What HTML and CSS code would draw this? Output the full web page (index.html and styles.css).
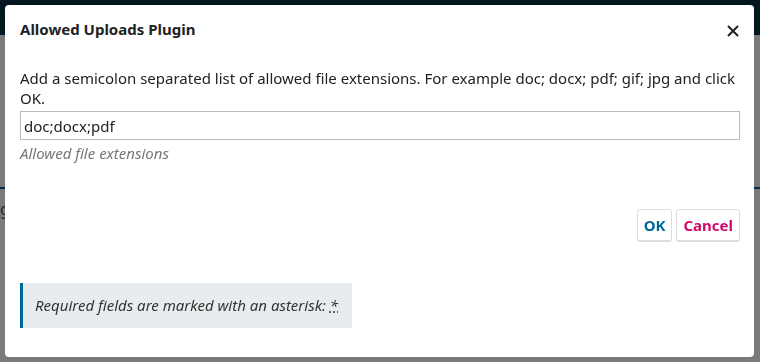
FILE: index.html
```html
<!DOCTYPE html>
<html lang="en">
<head>
  <meta charset="UTF-8" />
  <title>Allowed Uploads Plugin</title>
  <link rel="stylesheet" href="styles.css">
</head>
<body>
  <header class="app-bar"></header>
  <main class="page">
    <div class="page-tabs"></div>
    <p class="page-text">g</p>
  </main>

  <div class="overlay">
    <div class="modal" role="dialog">
      <div class="modal-header">
        <h2>Allowed Uploads Plugin</h2>
        <button class="close" aria-label="Close">
          <svg width="12" height="12" viewBox="0 0 12 12"><path d="M1 1L11 11M11 1L1 11" stroke="#222" stroke-width="2" fill="none"/></svg>
        </button>
      </div>
      <form class="modal-body">
        <p class="desc">Add a semicolon separated list of allowed file extensions. For example doc; docx; pdf; gif; jpg and click OK.</p>
        <input type="text" class="field" value="doc;docx;pdf" />
        <label class="help">Allowed file extensions</label>
        <div class="actions">
          <button type="button" class="btn btn-ok">OK</button>
          <button type="button" class="btn btn-cancel">Cancel</button>
        </div>
        <div class="notice">Required fields are marked with an asterisk: <abbr title="required">*</abbr></div>
      </form>
    </div>
  </div>
</body>
</html>
```

FILE: styles.css
```css
body {
  margin: 0;
  font-family: 'Noto Sans', sans-serif;
  font-size: 15px;
  color: #222;
  background: #fff;
}
.app-bar {
  height: 35px;
  background: #082c40;
}
.page {
  height: 327px;
}
.page-tabs {
  height: 152px;
  border-bottom: 2px solid #006798;
}
.page-text {
  margin: 9px 0 0;
  font-size: 16px;
  color: #555;
}
/* Modal */
.overlay {
  position: fixed;
  inset: 0;
  background: rgba(0, 0, 0, 0.52);
}
.modal {
  margin: 5px;
  width: 749px;
  height: 352px;
  background: #fff;
  border-radius: 4px;
  display: flex;
  flex-direction: column;
}
.modal-header {
  display: flex;
  justify-content: space-between;
  align-items: center;
  padding: 14px 15px;
}
.modal-header h2 {
  margin: 0;
  font-size: 15px;
  line-height: 20px;
  font-weight: 700;
}
.close {
  border: none;
  background: none;
  padding: 0;
  width: 12px;
  height: 12px;
  margin-top: 4px;
  margin-right: 0;
  display: flex;
  cursor: pointer;
}
.modal-body {
  padding: 15px 14px 0 15px;
  display: flex;
  flex-direction: column;
}
.desc {
  margin: 0 0 3px;
  line-height: 20px;
}
.field {
  box-sizing: border-box;
  height: 29px;
  width: 100%;
  border: 1px solid #bbb;
  border-radius: 0;
  padding: 0 3px;
  font-family: 'Noto Sans', sans-serif;
  font-size: 15px;
  color: #222;
}
.help {
  margin-top: 3px;
  line-height: 20px;
  font-style: italic;
  color: #777;
}
.actions {
  display: flex;
  justify-content: flex-end;
  gap: 4px;
  margin-top: 46px;
}
.btn {
  height: 32px;
  padding: 0 6px;
  background: #fff;
  border: 1px solid #ddd;
  border-radius: 3px;
  box-shadow: 0 1px 0 #ddd;
  font-family: 'Noto Sans', sans-serif;
  font-size: 15px;
  font-weight: 700;
  cursor: pointer;
}
.btn-ok {
  color: #006798;
}
.btn-cancel {
  color: #d00a6c;
}
.notice {
  align-self: flex-start;
  margin-top: 42px;
  padding: 12px 14px 13px 12px;
  line-height: 20px;
  border-left: 3px solid #006798;
  background: #e9ecee;
  font-style: italic;
  color: #333;
}
.notice abbr {
  text-decoration: underline dotted;
}
```
